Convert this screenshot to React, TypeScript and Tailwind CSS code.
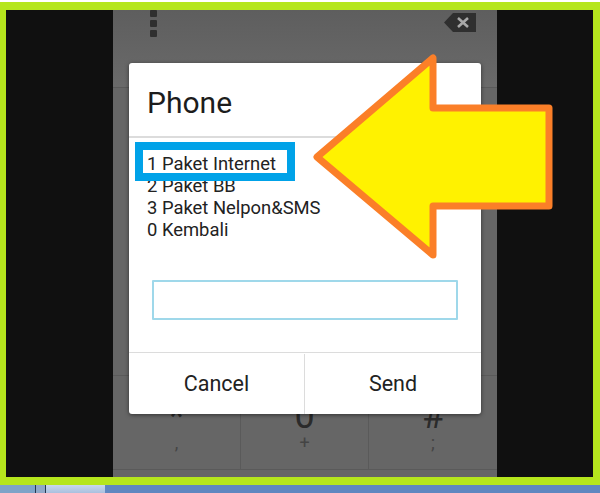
const keyRows = [
  { main: '*', sub: ',' },
  { main: '0', sub: '+' },
  { main: '#', sub: ';' },
];

function Backspace() {
  return (
    <svg width="33" height="19" viewBox="0 0 33 19">
      <path d="M0 9.5 L9 0 H32 V19 H9 Z" fill="#2f2f2f" />
      <path d="M14 5 L24 14 M24 5 L14 14" stroke="#a8a8a8" strokeWidth="2.6" />
    </svg>
  );
}

function Arrow() {
  return (
    <svg width="250" height="210" viewBox="0 0 250 210">
      <path
        d="M5 104 L121 5 V55 H237 V153 H121 V202 Z"
        fill="#fff200"
        stroke="#fb7f28"
        strokeWidth="7"
        strokeLinejoin="round"
      />
    </svg>
  );
}

function Dialog() {
  return (
    <div className="absolute left-[129px] top-[63px] flex h-[351px] w-[352px] flex-col rounded-[3px] bg-white font-['Roboto',sans-serif] shadow-[0_1px_4px_rgba(0,0,0,0.5)]">
      <div className="flex h-[75px] items-center border-b-2 border-[#dcdcdc] pl-[18px] pt-[5px] text-[30px] text-[#1c1c1c]">
        Phone
      </div>
      <div className="flex flex-col pl-[18px] pt-[15px] text-[18.4px] leading-[22px] text-[#222]">
        <span>1 Paket Internet</span>
        <span>2 Paket BB</span>
        <span>3 Paket Nelpon&amp;SMS</span>
        <span>0 Kembali</span>
      </div>
      <div className="ml-[23px] mr-[23px] mt-[39px] h-[40px] rounded-[1px] border-2 border-[#9fd8ea] bg-white" />
      <div className="mt-auto flex h-[62px] border-t border-[#dcdcdc] pt-[1px] text-[21.5px] text-[#222]">
        <div className="flex w-[176px] items-center justify-center border-r border-[#dcdcdc]">Cancel</div>
        <div className="flex flex-1 items-center justify-center">Send</div>
      </div>
    </div>
  );
}

export default function App() {
  return (
    <div className="relative flex h-[493px] w-[600px] flex-col overflow-hidden bg-white">
      <div className="mt-[2px] flex h-[483px] flex-col border-x-[6px] border-b-[8px] border-t-[8px] border-[#b5e61d] bg-[#101010] border-r-[7px]">
        <div className="ml-[107px] mr-[96px] flex flex-1 flex-col bg-[#666] font-['Roboto',sans-serif] text-[#2b2b2b]">
          <div className="relative flex h-[78px] items-start justify-between border-b border-[#5a5a5a] bg-gradient-to-b from-[#5e5e5e] to-[#6a6a6a] pl-[37px] pr-[20px]">
            <div className="flex flex-col gap-[3px] pt-0">
              <span className="h-[7px] w-[7px] rounded-[1px] bg-[#2f2f2f]" />
              <span className="h-[7px] w-[7px] rounded-[1px] bg-[#2f2f2f]" />
              <span className="h-[7px] w-[7px] rounded-[1px] bg-[#2f2f2f]" />
            </div>
            <div className="absolute left-[157px] top-[47px] text-[36px] leading-[40px]">00</div>
            <div className="pt-[3px]">
              <Backspace />
            </div>
          </div>
          <div className="flex-1" />
          <div className="grid h-[95px] grid-cols-3 border-t border-b border-[#5a5a5a]">
            {keyRows.map((k, i) => (
              <div
                key={k.main}
                className={`flex flex-col items-center pt-[23px] ${i < 2 ? 'border-r border-[#5a5a5a]' : ''}`}
              >
                <span className="text-[36px] leading-[34px]">{k.main}</span>
                <span className="-mt-[1px] text-[18px] leading-[22px] text-[#444]">{k.sub}</span>
              </div>
            ))}
          </div>
          <div className="h-[7px]" />
        </div>
      </div>
      <div className="flex h-[8px] bg-[#5f87c0]">
        <div className="w-[35px] bg-[#7ea3c8]" />
        <div className="w-[11px] border-x border-[#24364f] bg-[#8fa8c8]" />
        <div className="w-[59px] bg-gradient-to-b from-[#c8d8ee] to-[#a9c0de]" />
      </div>
      <Dialog />
      <div className="absolute left-[312px] top-[53px] h-[210px] w-[250px]">
        <Arrow />
      </div>
      <div className="absolute left-[135px] top-[142px] h-[39px] w-[160px] border-[8px] border-[#00a2e8]" />
    </div>
  );
}
